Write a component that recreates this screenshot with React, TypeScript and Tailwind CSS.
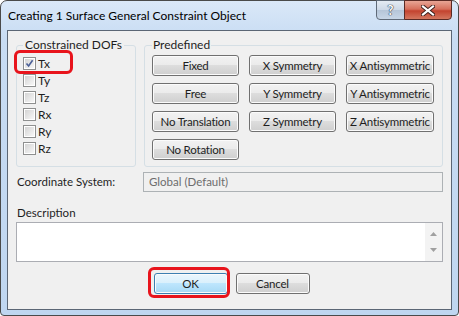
import React from 'react';

// Win7 style "Surface General Constraint" dialog

const dofs = ['Tx', 'Ty', 'Tz', 'Rx', 'Ry', 'Rz'];

const presets = [
  'Fixed',
  'X Symmetry',
  'X Antisymmetric',
  'Free',
  'Y Symmetry',
  'Y Antisymmetric',
  'No Translation',
  'Z Symmetry',
  'Z Antisymmetric',
  'No Rotation',
];

function WinButton({ label, isDefault, className = '' }: { label: string; isDefault?: boolean; className?: string }) {
  return (
    <button
      className={
        'h-[21px] whitespace-nowrap rounded-[3px] border px-0 text-[11.5px] leading-none tracking-[-0.2px] text-[#1e1e1e] shadow-[inset_0_0_0_1px_#fbfbfb] ' +
        (isDefault
          ? 'border-[#3c7fb1] bg-[linear-gradient(#eaf6fd_0%,#d9f0fc_49%,#bee6fd_50%,#a7d9f5_100%)] '
          : 'border-[#707070] bg-[linear-gradient(#f2f2f2_0%,#ebebeb_49%,#dddddd_50%,#cfcfcf_100%)] ') +
        className
      }
    >
      {label}
    </button>
  );
}

function CheckBox({ checked }: { checked?: boolean }) {
  return (
    <span className="flex h-[13px] w-[13px] items-center justify-center border border-[#8e8f8f] bg-white p-[1px]">
      <span className="relative h-full w-full bg-[linear-gradient(135deg,#d4d4d4,#f7f7f7)]">
        {checked && (
          <svg viewBox="0 0 9 9" className="absolute inset-0 h-[9px] w-[9px]">
            <path d="M1.5 4.5 L3.6 7 L7.6 1.2" fill="none" stroke="#4a5f97" strokeWidth="1.6" />
          </svg>
        )}
      </span>
    </span>
  );
}

export default function App() {
  return (
    <div className="relative h-[316px] w-[459px] rounded-t-[7px] rounded-b-[4px] border border-[#4a4a4a] bg-[linear-gradient(#dae8f8_0%,#c8dcf3_12%,#bfd6f0_100%)] font-['Lato',sans-serif] text-[11.5px] text-[#1e1e1e]">
      {/* Title bar */}
      <div className="flex h-[29px] items-start justify-between">
        <div className="pl-[7px] pt-[7px] leading-[16px] text-[12px] text-black">
          Creating 1 Surface General Constraint Object
        </div>
        <div className="-mt-px mr-[6px] flex">
          <div className="flex h-[20px] w-[29px] items-center justify-center rounded-bl-[4px] border border-[#5f6a78] bg-[linear-gradient(#e4ebf3_0%,#ccd8e6_50%,#b5c5d8_51%,#c7d6e7_100%)]">
            <span className="text-[13px] font-bold leading-none text-white [text-shadow:0_0_1px_#2d3a4c,0_0_1px_#2d3a4c,0_0_1px_#2d3a4c]">?</span>
          </div>
          <div className="-ml-px flex h-[20px] w-[48px] items-center justify-center rounded-br-[4px] border border-[#5a2a24] bg-[linear-gradient(#e8a595_0%,#d6705c_45%,#c3432f_55%,#d3775f_100%)]">
            <svg viewBox="0 0 14 11" className="h-[11px] w-[14px]">
              <path d="M2 1.5 L12 9.5 M12 1.5 L2 9.5" stroke="#3a1e1a" strokeWidth="4" strokeLinecap="square" />
              <path d="M2 1.5 L12 9.5 M12 1.5 L2 9.5" stroke="#ffffff" strokeWidth="2.2" strokeLinecap="square" />
            </svg>
          </div>
        </div>
      </div>

      {/* Client area */}
      <div className="mx-[6px] flex h-[280px] flex-col border border-[#5b6675] bg-[#f0f0f0]">
        <div className="mt-[7px] flex gap-[8px] px-[8px]">
          <fieldset className="h-[129px] w-[120px] rounded-[3px] border border-[#d5dfe5] pl-[6px] pt-[3px]">
            <legend className="px-[2px] text-[12px] leading-[14px]">Constrained DOFs</legend>
            {dofs.map((d, i) => (
              <div key={d} className="flex h-[17px] items-center gap-[2px]">
                <CheckBox checked={i === 0} />
                <span className="text-[12px] leading-[14px]">{d}</span>
              </div>
            ))}
          </fieldset>

          <fieldset className="h-[129px] flex-1 rounded-[3px] border border-[#d5dfe5] pl-[7px] pt-[3px]">
            <legend className="px-[1px] text-[12px] leading-[14px]">Predefined</legend>
            <div className="grid grid-cols-[87px_87px_88px] gap-x-[10px] gap-y-[7px]">
              {presets.map((p) => (
                <WinButton key={p} label={p} />
              ))}
            </div>
          </fieldset>
        </div>

        <div className="mt-[5px] flex items-center pl-[9px] pr-[8px]">
          <span className="w-[126px] leading-[14px]">Coordinate System:</span>
          <div className="flex h-[20px] flex-1 items-center border border-[#adb2b5] bg-[#f0f0f0] pl-[5px] text-[#6d6d6d]">
            Global (Default)
          </div>
        </div>

        <div className="mt-[14px] pl-[9px] leading-[14px]">Description</div>
        <div className="mx-[8px] mt-[2px] flex h-[40px] border border-[#abadb3] bg-white">
          <div className="flex-1" />
          <div className="flex w-[17px] flex-col items-center justify-between bg-[#f3f3f3] py-[9px]">
            <svg viewBox="0 0 7 4" className="h-[4px] w-[7px]">
              <path d="M0 4 L3.5 0 L7 4 Z" fill="#a0a0a0" />
            </svg>
            <svg viewBox="0 0 7 4" className="h-[4px] w-[7px]">
              <path d="M0 0 L7 0 L3.5 4 Z" fill="#a0a0a0" />
            </svg>
          </div>
        </div>

        <div className="mt-[11px] flex justify-center gap-[8px] pl-[4px]">
          <WinButton label="OK" isDefault className="w-[74px]" />
          <WinButton label="Cancel" className="w-[74px]" />
        </div>
      </div>

      {/* red annotation outlines */}
      <div className="pointer-events-none absolute left-[13px] top-[49px] h-[24px] w-[59px] rounded-[6px] border-[3px] border-[#e8141c]" />
      <div className="pointer-events-none absolute left-[147px] top-[266px] h-[31px] w-[82px] rounded-[6px] border-[3px] border-[#e8141c]" />
    </div>
  );
}
